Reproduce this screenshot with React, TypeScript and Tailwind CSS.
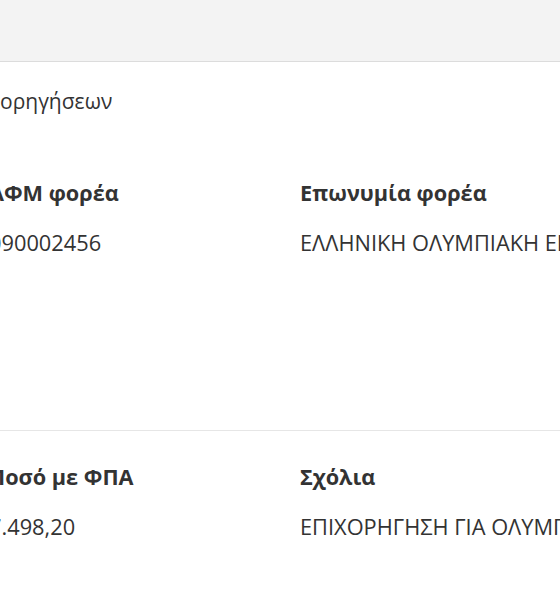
import React from "react";

const font = { fontFamily: '"Open Sans", "Noto Sans", sans-serif' };

function Field({ label, value }: { label: string; value: string }) {
  return (
    <div>
      <div className="text-[21.7px] leading-[28px] font-bold text-[#333] whitespace-nowrap">{label}</div>
      <div className="mt-[22px] text-[21.8px] leading-[28px] text-[#333] whitespace-nowrap">{value}</div>
    </div>
  );
}

export default function App() {
  return (
    <div className="w-[560px] h-[600px] bg-white overflow-hidden" style={font}>
      {/* top bar */}
      <div className="h-[62px] bg-[#f3f3f3] border-b border-[#dcdcdc]" />

      <div className="ml-[-11px]">
        <div className="pt-[25px] text-[21px] leading-[28px] text-[#333] whitespace-nowrap pl-[11px]">
          ορηγήσεων
        </div>

        {/* row 1 */}
        <div className="grid grid-cols-[311px_311px] pt-[64px] h-[316px] border-b border-[#e6e6e6]">
          <Field label="ΑΦΜ φορέα" value="090002456" />
          <Field label="Επωνυμία φορέα" value="ΕΛΛΗΝΙΚΗ ΟΛΥΜΠΙΑΚΗ ΕΠΙΤΡΟΠΗ" />
        </div>

        {/* row 2 */}
        <div className="grid grid-cols-[311px_311px] pt-[32px]">
          <Field label="Ποσό με ΦΠΑ" value="7.498,20" />
          <Field label="Σχόλια" value="ΕΠΙΧΟΡΗΓΗΣΗ ΓΙΑ ΟΛΥΜΠΙΑΚΟΥΣ ΑΓΩΝΕΣ" />
        </div>
      </div>
    </div>
  );
}
